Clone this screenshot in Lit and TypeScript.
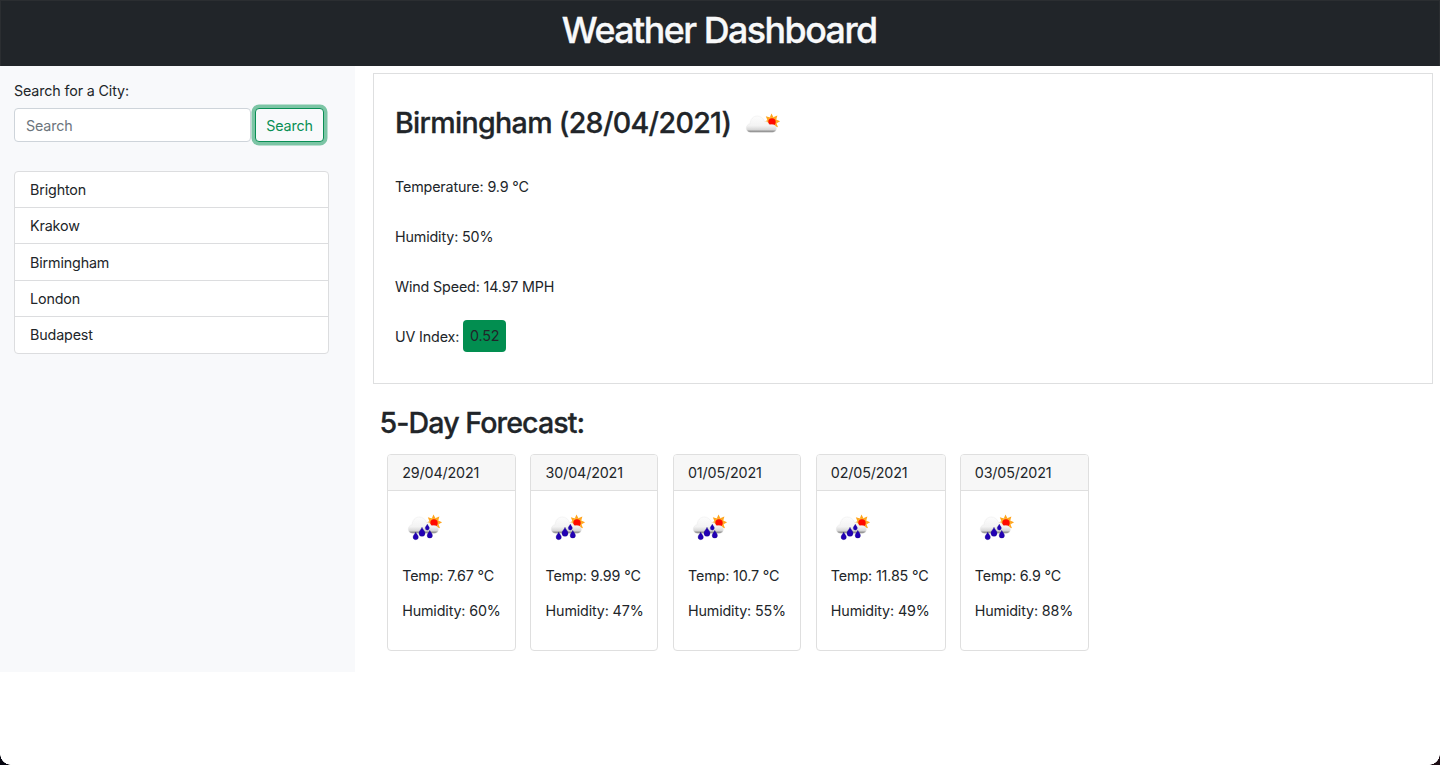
import { LitElement, html, css, svg, nothing } from "lit";
import { customElement, property } from "lit/decorators.js";

interface Day {
  date: string;
  temp: string;
  humidity: string;
}

const CITIES = ["Brighton", "Krakow", "Birmingham", "London", "Budapest"];

const FORECAST: Day[] = [
  { date: "29/04/2021", temp: "7.67", humidity: "60" },
  { date: "30/04/2021", temp: "9.99", humidity: "47" },
  { date: "01/05/2021", temp: "10.7", humidity: "55" },
  { date: "02/05/2021", temp: "11.85", humidity: "49" },
  { date: "03/05/2021", temp: "6.9", humidity: "88" },
];

@customElement("weather-icon")
class WeatherIcon extends LitElement {
  @property({ type: Boolean }) rain = false;

  static styles = css`
    :host { display: block; width: 36px; height: 30px; }
    svg { display: block; }
  `;

  render() {
    const drop = (x: number, y: number, s: number) => svg`
      <path transform="translate(${x} ${y}) scale(${s})" fill="#2200b4" stroke="#17107a" stroke-width=".3"
        d="M0-4.2C.5-2.4 2.8-.8 2.8 1.2A2.8 2.8 0 0 1-2.8 1.2C-2.8-.8-.5-2.4 0-4.2Z"/>`;
    const rays = [0, 1, 2, 3, 4, 5, 6, 7].map(
      (i) => svg`<path transform="rotate(${i * 45 - 3} 26.9 9.7)" fill="#ffa41c" d="M25 5.500L26.900 1.500L28.800 5.500Z"/>`
    );
    return html`<svg width="36" height="30" viewBox="0 0 36 30">
      <defs>
        <linearGradient id="c" x1="0" y1="0" x2="0" y2="1">
          <stop offset="0" stop-color="#fdfdfd"/>
          <stop offset=".6" stop-color="#f3f3f3"/>
          <stop offset=".84" stop-color="#d8d8d8"/>
          <stop offset="1" stop-color="#707070"/>
        </linearGradient>
      </defs>
      ${rays}
      <circle cx="26.9" cy="9.7" r="4.8" fill="#ffae22"/>
      <circle cx="27" cy="9.9" r="3.700" fill="#ff0a00"/>
      <path fill="url(#c)" stroke="#e6e6e6" stroke-width=".4"
        d="M5.500 20.200C2.800 20.200 1.300 18.500 1.300 16.200c0-2.400 1.500-4.100 3.800-4.500C5.300 7.300 8.200 4 12.200 4c3.500 0 6.200 2.100 7.200 5.400 2-.4 3.800.8 4.500 2.800 .6.400 1.200.5 2 .4 3.300-.3 5.500 1.200 5.500 3.900 0 2.200-1.600 3.700-4 3.700z"/>
      ${this.rain
        ? svg`${drop(15, 18.900, 1.1)}${drop(20.300, 14.2, 0.75)}${drop(8.700, 22.900, 0.95)}${drop(22.800, 21.300, 0.95)}`
        : nothing}
    </svg>`;
  }
}

@customElement("app-root")
class AppRoot extends LitElement {
  static styles = css`
    :host {
      display: block;
      position: relative;
      height: 765px;
      overflow: hidden;
      background: #fff;
      color: #212529;
      font: 400 14.3px/21.5px Inter, "Liberation Sans", sans-serif;
      letter-spacing: -0.14px;
    }
    * { box-sizing: border-box; }
    h1, h2, p, ul { margin: 0; padding: 0; font-weight: inherit; }
    .top {
      height: 66px;
      padding-top: 8px;
      background: #212529;
      border: 1px solid #2b2e31;
      border-bottom: 0;
      color: #f8f9fa;
      text-align: center;
    }
    .top h1 { font-size: 35.8px; line-height: 43px; font-weight: 500; letter-spacing: -1.52px; text-indent: -1.5px; -webkit-text-stroke: 0.35px currentColor; }
    .layout { display: flex; align-items: flex-start; }
    aside { flex: none; width: 355px; height: 606px; padding: 14px 26px 0 14px; background: #f8f9fb; }
    .search { display: flex; gap: 4px; margin-top: 6px; }
    .field {
      width: 237px; height: 34px; padding: 6px 11px;
      border: 1px solid #ced4da; border-radius: 4px;
      background: #fff; color: #6c757d;
    }
    .btn {
      width: 69px; height: 34px; padding: 2px 0 0; border: 1px solid #0a8f55; border-radius: 4px;
      background: #f8f9fb; color: #0a8f55; font: inherit; letter-spacing: inherit;
      box-shadow: 0 0 0 3.5px #7cc5a5;
    }
    .cities {
      list-style: none; margin-top: 29px; height: 183px;
      display: grid; grid-template-rows: 36px 36px 37px 36px 36px;
      border: 1px solid #dcdddf; border-radius: 4px; background: #fff;
    }
    .cities li { padding: 7px 15px 0; border-bottom: 1px solid #dcdddf; }
    .cities li:nth-child(3) { padding-top: 8px; }
    .cities li:last-child { border-bottom: 0; }
    main { flex: 1; padding: 7px 7px 0 18px; }
    .current { height: 311px; border: 1px solid #dedfe0; padding: 32px 21px 0; }
    h2 { font-size: 28.6px; line-height: 34px; font-weight: 500; -webkit-text-stroke: 0.3px currentColor; }
    .city { letter-spacing: -0.69px; width: 335px; white-space: nowrap; }
    .five { letter-spacing: -0.92px; text-indent: -0.5px; }
    .title { display: flex; align-items: flex-start; gap: 15px; height: 36px; }
    .title weather-icon { margin-top: 6px; }
    .facts { display: grid; grid-auto-rows: 50px; align-items: center; margin-top: 20px; }
    .uvrow { display: flex; align-items: center; gap: 4px; }
    .uv { height: 32px; width: 43px; padding: 5px 0; text-align: center; border-radius: 4px; background: #028e50; margin-top: -2px; }
    .forecast { padding: 22px 0 0 7px; }
    .days {
      display: grid;
      grid-template-columns: 129px 128px 128px 130px 129px;
      column-gap: 14.4px; margin-top: 14px; padding-left: 7px;
    }
    .card { height: 197px; border: 1px solid #dfdfdf; border-radius: 4px; overflow: hidden; white-space: nowrap; }
    .card:nth-child(4) { margin: 0 -0.5px 0 0.5px; }
    .date { height: 36px; padding: 7px 14.2px 0; background: #f7f7f7; border-bottom: 1px solid #dfdfdf; }
    .body { padding: 22px 14.2px 0; }
    .body weather-icon { margin-left: 4.5px; }
    .body p { margin-top: 13px; }
    .body .temp { margin-top: 22px; }
    .corner { position: absolute; bottom: 0; width: 11px; height: 11px; }
    .left { left: 0; background: radial-gradient(circle at 100% 0, transparent 10.5px, #05050f 11px); }
    .right { right: 0; background: radial-gradient(circle at 0 0, transparent 10.5px, #1c0d14 11px); }
  `;

  render() {
    return html`
      <header class="top"><h1>Weather Dashboard</h1></header>
      <div class="layout">
        <aside>
          <div>Search for a City:</div>
          <div class="search">
            <div class="field">Search</div>
            <button class="btn">Search</button>
          </div>
          <ul class="cities">${CITIES.map((c) => html`<li>${c}</li>`)}</ul>
        </aside>
        <main>
          <section class="current">
            <div class="title"><h2 class="city">Birmingham (28/04/2021)</h2><weather-icon></weather-icon></div>
            <div class="facts">
              <p>Temperature: 9.9 °C</p>
              <p>Humidity: 50%</p>
              <p>Wind Speed: 14.97 MPH</p>
              <p class="uvrow">UV Index: <span class="uv">0.52</span></p>
            </div>
          </section>
          <section class="forecast">
            <h2 class="five">5-Day Forecast:</h2>
            <div class="days">
              ${FORECAST.map((d) => html`<article class="card">
                <div class="date">${d.date}</div>
                <div class="body">
                  <weather-icon rain></weather-icon>
                  <p class="temp">Temp: ${d.temp} °C</p>
                  <p>Humidity: ${d.humidity}%</p>
                </div>
              </article>`)}
            </div>
          </section>
        </main>
      </div>
      <span class="corner left"></span>
      <span class="corner right"></span>
    `;
  }
}
